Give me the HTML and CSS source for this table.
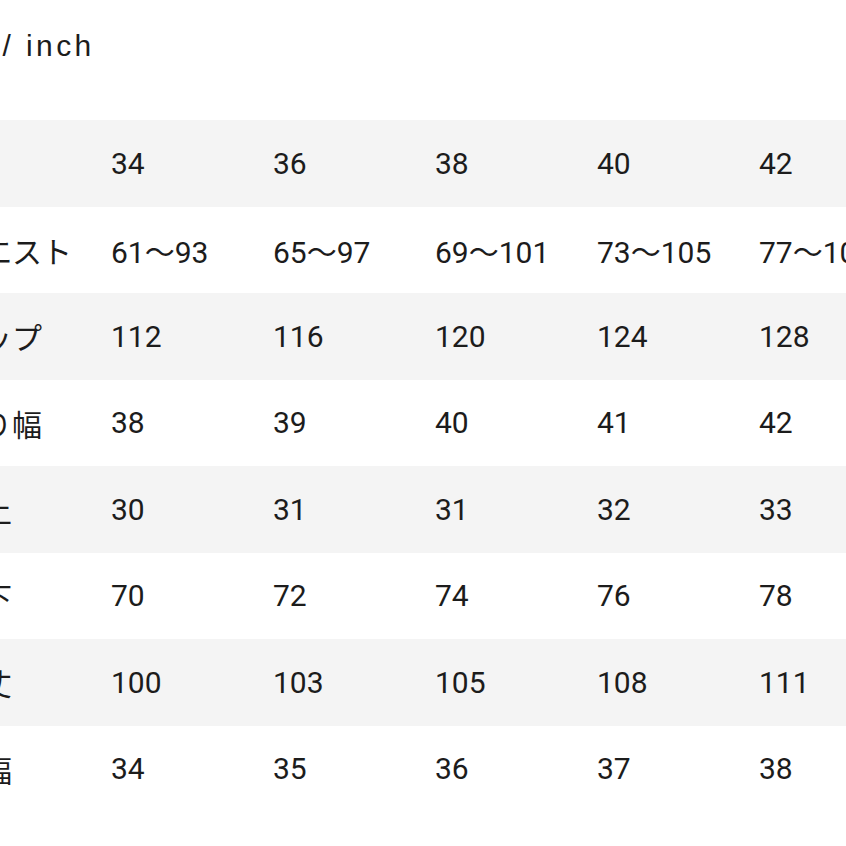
FILE: index.html
```html
<!DOCTYPE html>
<html lang="ja">
<head>
<meta charset="utf-8">
<title>サイズ表</title>
<link rel="stylesheet" href="styles.css">
</head>
<body>
<div class="page">
  <div class="unit">cm / inch</div>
  <div class="table">
    <div class="row shade"><div class="label"></div><div class="cell">34</div><div class="cell">36</div><div class="cell">38</div><div class="cell">40</div><div class="cell">42</div></div>
    <div class="row"><div class="label">ウエスト</div><div class="cell">61〜93</div><div class="cell">65〜97</div><div class="cell">69〜101</div><div class="cell">73〜105</div><div class="cell">77〜109</div></div>
    <div class="row shade"><div class="label">ヒップ</div><div class="cell">112</div><div class="cell">116</div><div class="cell">120</div><div class="cell">124</div><div class="cell">128</div></div>
    <div class="row"><div class="label">渡り幅</div><div class="cell">38</div><div class="cell">39</div><div class="cell">40</div><div class="cell">41</div><div class="cell">42</div></div>
    <div class="row shade"><div class="label">股上</div><div class="cell">30</div><div class="cell">31</div><div class="cell">31</div><div class="cell">32</div><div class="cell">33</div></div>
    <div class="row"><div class="label">股下</div><div class="cell">70</div><div class="cell">72</div><div class="cell">74</div><div class="cell">76</div><div class="cell">78</div></div>
    <div class="row shade"><div class="label">総丈</div><div class="cell">100</div><div class="cell">103</div><div class="cell">105</div><div class="cell">108</div><div class="cell">111</div></div>
    <div class="row"><div class="label">裾幅</div><div class="cell">34</div><div class="cell">35</div><div class="cell">36</div><div class="cell">37</div><div class="cell">38</div></div>
  </div>
</div>
</body>
</html>
```

FILE: styles.css
```css
html, body {
  margin: 0;
  padding: 0;
  background: #ffffff;
  overflow: hidden;
}

.page {
  width: 846px;
  height: 846px;
  overflow: hidden;
  color: #1c1c1c;
}

.unit {
  margin-left: -56px;
  padding-top: 28px;
  height: 120px;
  box-sizing: border-box;
  font-family: "Liberation Sans", Arial, sans-serif;
  font-size: 30px;
  line-height: 36px;
  letter-spacing: 3.4px;
  white-space: nowrap;
}

.table {
  margin-left: -48px;
  display: flex;
  flex-direction: column;
  width: 1100px;
}

.row {
  display: grid;
  grid-template-columns: 159px repeat(5, 162px);
  height: 86.5px;
  align-items: center;
  font-family: Roboto, "Noto Sans CJK JP", sans-serif;
  font-size: 30px;
  white-space: nowrap;
}

.row.shade {
  background: #f4f4f4;
}

.label {
  font-family: "Noto Sans CJK JP", sans-serif;
}
```
